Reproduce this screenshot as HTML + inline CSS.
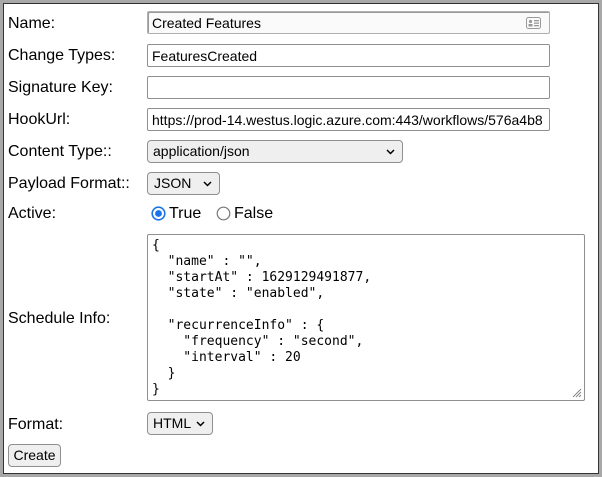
<!DOCTYPE html>
<html><head><style>
*{box-sizing:border-box;margin:0;padding:0}
body{width:602px;height:477px;overflow:hidden;background:#fff;font-family:"Liberation Sans",Arial,sans-serif;font-size:16px;color:#000;position:relative}
.outer{position:absolute;left:0;top:0;width:602px;height:477px;border:3px solid #a8a8a8}
.inner{position:absolute;left:3px;top:3px;width:596px;height:471px;border:1px solid #333}
.l{position:absolute;left:8px;font-size:16px}
.in{position:absolute;left:147px;width:403px;height:23px;border:1px solid #8f8f8f;border-radius:2px;padding-left:4px;font-size:14px;line-height:22px;background:#fff;white-space:nowrap;overflow:hidden}
.sel{position:absolute;left:147px;height:23px;border:1px solid #8f8f8f;border-radius:4px;background:#efefef;font-size:14px;line-height:21px;padding-left:5px}
.sel svg{position:absolute;right:7px;top:8px}
.ta{position:absolute;left:147px;top:234px;width:438px;height:167px;border:1px solid #8f8f8f;border-radius:2px;font-family:"DejaVu Sans Mono","Liberation Mono",monospace;font-size:13px;line-height:16px;padding:3px 4px;white-space:pre}
</style></head><body>
<div class="outer"></div><div class="inner"></div>
<div class="l" style="top:15px">Name:</div>
<div class="in" style="top:11px;background:#fafafa;border-color:#b0b0b0;box-shadow:inset 1px 1px 0 #999">Created Features
<svg style="position:absolute;right:8px;top:5px" width="15" height="12" viewBox="0 0 15 12"><rect x="0.5" y="0.5" width="14" height="11" rx="2" fill="none" stroke="#999"/><circle cx="4.5" cy="4.5" r="1.6" fill="#999"/><rect x="2.5" y="7" width="4" height="2.5" fill="#999"/><rect x="8" y="3" width="5" height="1.3" fill="#999"/><rect x="8" y="5.5" width="5" height="1.3" fill="#999"/><rect x="8" y="8" width="5" height="1.3" fill="#999"/></svg></div>
<div class="l" style="top:47px">Change Types:</div>
<div class="in" style="top:44px">FeaturesCreated</div>
<div class="l" style="top:79px">Signature Key:</div>
<div class="in" style="top:76px"></div>
<div class="l" style="top:111px">HookUrl:</div>
<div class="in" style="top:108px">https://prod-14.westus.logic.azure.com:443/workflows/576a4b8</div>
<div class="l" style="top:143px">Content Type::</div>
<div class="sel" style="top:140px;width:256px">application/json<svg width="9" height="6" viewBox="0 0 9 6"><path d="M1 1L4.5 4.5L8 1" fill="none" stroke="#000" stroke-width="1.5"/></svg></div>
<div class="l" style="top:175px">Payload Format::</div>
<div class="sel" style="top:172px;width:73px;padding-left:6px">JSON<svg width="9" height="6" viewBox="0 0 9 6"><path d="M1 1L4.5 4.5L8 1" fill="none" stroke="#000" stroke-width="1.5"/></svg></div>
<div class="l" style="top:205px">Active:</div>
<svg style="position:absolute;left:151px;top:206px" width="15" height="15"><circle cx="7.5" cy="7.5" r="6.3" fill="#fff" stroke="#1a73e8" stroke-width="1.6"/><circle cx="7.5" cy="7.5" r="3.4" fill="#1a73e8"/></svg>
<div class="l" style="left:169px;top:205px;font-size:16px">True</div>
<svg style="position:absolute;left:216px;top:206px" width="15" height="15"><circle cx="7.5" cy="7.5" r="6.3" fill="#fff" stroke="#777" stroke-width="1.2"/></svg>
<div class="l" style="left:234px;top:205px;font-size:16px">False</div>
<div class="l" style="top:310px">Schedule Info:</div>
<div class="ta">{
  "name" : "",
  "startAt" : 1629129491877,
  "state" : "enabled",

  "recurrenceInfo" : {
    "frequency" : "second",
    "interval" : 20
  }
}<svg style="position:absolute;right:2px;bottom:2px" width="11" height="11"><path d="M10 2L2 10M10 5L5 10M10 8L8 10" stroke="#888"/></svg></div>
<div class="l" style="top:416px">Format:</div>
<div class="sel" style="top:412px;width:66px">HTML<svg width="9" height="6" viewBox="0 0 9 6"><path d="M1 1L4.5 4.5L8 1" fill="none" stroke="#000" stroke-width="1.5"/></svg></div>
<div style="position:absolute;left:8px;top:444px;width:53px;height:23px;border:1px solid #8f8f8f;border-radius:4px;background:#efefef;font-size:14px;line-height:21px;text-align:center">Create</div>
</body></html>
